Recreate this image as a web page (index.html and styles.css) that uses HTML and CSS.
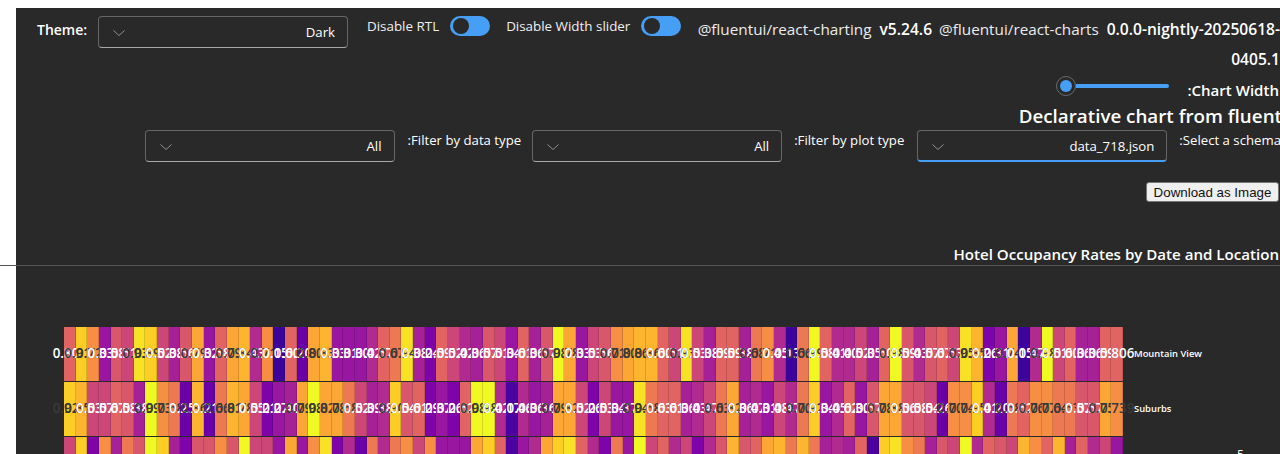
FILE: index.html
```html
<!DOCTYPE html>
<html lang="en">
<head>
<meta charset="utf-8">
<title>Declarative chart from fluentui</title>
<link rel="stylesheet" href="styles.css">
</head>
<body>
<main class="app">
  <header class="top">
    <span class="theme-label">Theme:</span>
    <div class="drop"><svg class="chev" viewBox="0 0 12 6"><path d="M.5.5 6 5.5 11.5.5"/></svg><span>Dark</span></div>
    <span class="sw-label first">Disable RTL</span>
    <div class="switch"><span class="knob"></span></div>
    <span class="sw-label second">Disable Width slider</span>
    <div class="switch"><span class="knob"></span></div>
    <p class="versions"><span>@fluentui/react-charting</span> <b>v5.24.6</b> <span>@fluentui/react-charts</span> <b>0.0.0-nightly-20250618-<br>0405.1</b></p>
  </header>
  <div class="width-row">
    <div class="slider"><span class="thumb"><span class="dot"></span></span><span class="rail"></span></div>
    <b class="width-label">:Chart Width</b>
  </div>
  <h1 class="title">Declarative chart from fluent</h1>
  <div class="filters">
    <div class="drop lead"><svg class="chev" viewBox="0 0 12 6"><path d="M.5.5 6 5.5 11.5.5"/></svg><span>All</span></div>
    <label class="f-label">:Filter by data type</label>
    <div class="drop"><svg class="chev" viewBox="0 0 12 6"><path d="M.5.5 6 5.5 11.5.5"/></svg><span>All</span></div>
    <label class="f-label plot">:Filter by plot type</label>
    <div class="drop focus"><svg class="chev" viewBox="0 0 12 6"><path d="M.5.5 6 5.5 11.5.5"/></svg><span>data_718.json</span></div>
    <label class="f-label last">:Select a schema</label>
  </div>
  <div class="actions"><button class="dl" type="button">Download as Image</button></div>
  <h2 class="chart-title">Hotel Occupancy Rates by Date and Location</h2>
  <div class="rule"></div>
  <section class="heat">
    <div class="row">
      <div class="cells">
<i class="a">0.807</i><i class="h">0.912</i><i class="c">0.724</i><i class="d">0.335</i><i class="e">0.583</i><i class="f">0.517</i><i class="y">0.934</i><i class="h">0.897</i><i class="f">0.523</i><i class="m">0.381</i><i class="e">0.568</i><i class="p">0.796</i><i class="d">0.326</i><i class="a">0.587</i><i class="p">0.791</i><i class="i">0.841</i><i class="n">0.431</i><i class="c">0.713</i><i class="l">0.153</i><i class="a">0.601</i><i class="k">0.208</i><i class="p">0.809</i><i class="i">0.839</i><i class="d">0.332</i>
<i class="d">0.318</i><i class="d">0.306</i><i class="n">0.425</i><i class="a">0.572</i><i class="o">0.672</i><i class="y">0.941</i><i class="m">0.384</i><i class="j">0.245</i><i class="a">0.592</i><i class="f">0.527</i><i class="n">0.424</i><i class="m">0.367</i><i class="e">0.574</i><i class="f">0.514</i><i class="d">0.346</i><i class="a">0.617</i><i class="m">0.368</i><i class="e">0.577</i><i class="g">0.987</i><i class="p">0.788</i><i class="d">0.335</i><i class="f">0.533</i><i class="e">0.565</i><i class="c">0.719</i><i class="p">0.803</i><i class="i">0.869</i>
<i class="i">0.861</i><i class="a">0.607</i><i class="f">0.513</i><i class="y">0.935</i><i class="f">0.537</i><i class="m">0.382</i><i class="a">0.598</i><i class="a">0.596</i><i class="m">0.386</i><i class="o">0.681</i><i class="c">0.718</i><i class="n">0.453</i><i class="l">0.139</i><i class="o">0.669</i><i class="g">0.991</i><i class="a">0.589</i><i class="n">0.417</i><i class="n">0.402</i><i class="f">0.525</i><i class="m">0.356</i><i class="a">0.603</i><i class="g">0.983</i><i class="e">0.594</i><i class="n">0.437</i><i class="e">0.574</i>
<i class="a">0.677</i><i class="f">0.536</i><i class="y">0.956</i><i class="i">0.854</i><i class="j">0.261</i><i class="d">0.316</i><i class="p">0.745</i><i class="l">0.155</i><i class="n">0.476</i><i class="g">0.989</i><i class="f">0.519</i><i class="a">0.608</i><i class="m">0.367</i><i class="m">0.361</i><i class="a">0.597</i><i class="a">0.806</i>
      </div>
      <span class="loc">Mountain View</span>
    </div>
    <div class="row">
      <div class="cells">
<i class="h">0.925</i><i class="i">0.857</i><i class="f">0.537</i><i class="f">0.576</i><i class="a">0.679</i><i class="e">0.588</i><i class="m">0.386</i><i class="g">0.996</i><i class="c">0.738</i><i class="o">0.682</i><i class="k">0.259</i><i class="i">0.861</i><i class="k">0.211</i><i class="o">0.661</i><i class="i">0.819</i><i class="p">0.787</i><i class="f">0.552</i><i class="j">0.216</i><i class="d">0.270</i><i class="m">0.401</i><i class="p">0.798</i><i class="g">0.988</i><i class="p">0.829</i><i class="p">0.788</i>
<i class="o">0.682</i><i class="f">0.521</i><i class="m">0.393</i><i class="n">0.386</i><i class="h">0.909</i><i class="e">0.547</i><i class="a">0.618</i><i class="j">0.296</i><i class="d">0.373</i><i class="j">0.266</i><i class="a">0.627</i><i class="g">0.988</i><i class="g">0.987</i><i class="n">0.425</i><i class="v">0.174</i><i class="n">0.467</i><i class="d">0.366</i><i class="m">0.369</i><i class="p">0.798</i><i class="p">0.828</i><i class="f">0.521</i><i class="j">0.261</i><i class="f">0.539</i><i class="d">0.345</i><i class="d">0.376</i><i class="y">0.943</i>
<i class="o">0.683</i><i class="a">0.631</i><i class="a">0.619</i><i class="m">0.368</i><i class="n">0.432</i><i class="f">0.476</i><i class="o">0.633</i><i class="p">0.829</i><i class="m">0.363</i><i class="n">0.478</i><i class="d">0.318</i><i class="f">0.487</i><i class="n">0.470</i><i class="o">0.701</i><i class="h">0.926</i><i class="d">0.344</i><i class="n">0.457</i><i class="a">0.628</i><i class="d">0.306</i><i class="e">0.577</i><i class="p">0.783</i><i class="p">0.888</i><i class="e">0.567</i><i class="e">0.584</i>
<i class="f">0.544</i><i class="k">0.260</i><i class="c">0.707</i><i class="c">0.748</i><i class="h">0.958</i><i class="n">0.419</i><i class="k">0.202</i><i class="o">0.682</i><i class="a">0.621</i><i class="c">0.768</i><i class="c">0.774</i><i class="o">0.641</i><i class="o">0.637</i><i class="e">0.578</i><i class="e">0.573</i><i class="p">0.756</i><i class="c">0.739</i>
      </div>
      <span class="loc">Suburbs</span>
    </div>
    <div class="row">
      <div class="cells">
<i class="f"></i><i class="h"></i><i class="j"></i><i class="c"></i><i class="m"></i><i class="o"></i><i class="e"></i><i class="g"></i><i class="h"></i><i class="m"></i><i class="j"></i><i class="e"></i><i class="e"></i><i class="c"></i><i class="e"></i><i class="g"></i><i class="f"></i><i class="f"></i><i class="d"></i><i class="p"></i><i class="d"></i><i class="c"></i><i class="y"></i><i class="j"></i>
<i class="n"></i><i class="k"></i><i class="o"></i><i class="n"></i><i class="o"></i><i class="c"></i><i class="f"></i><i class="c"></i><i class="d"></i><i class="d"></i><i class="d"></i><i class="p"></i><i class="h"></i><i class="a"></i><i class="v"></i><i class="d"></i><i class="n"></i><i class="p"></i><i class="h"></i><i class="y"></i><i class="a"></i><i class="n"></i><i class="j"></i><i class="o"></i><i class="d"></i><i class="g"></i>
<i class="f"></i><i class="a"></i><i class="n"></i><i class="f"></i><i class="j"></i><i class="n"></i><i class="e"></i><i class="i"></i><i class="e"></i><i class="a"></i><i class="p"></i><i class="i"></i><i class="o"></i><i class="i"></i><i class="o"></i><i class="m"></i><i class="n"></i><i class="m"></i><i class="a"></i><i class="v"></i><i class="h"></i><i class="y"></i><i class="c"></i><i class="o"></i><i class="m"></i>
<i class="e"></i><i class="f"></i><i class="g"></i><i class="n"></i><i class="a"></i><i class="e"></i><i class="f"></i><i class="i"></i><i class="c"></i><i class="a"></i><i class="i"></i><i class="m"></i><i class="a"></i><i class="n"></i><i class="f"></i><i class="d"></i>
      </div>
      <span class="tick">5</span>
    </div>
  </section>
</main>
</body>
</html>
```
FILE: styles.css
```css
html, body {
  margin: 0;
  height: 454px;
  overflow: hidden;
  background: #fff;
}
body {
  padding: 8px 0 0 16px;
  box-sizing: border-box;
  font-family: "Open Sans", "Noto Sans", sans-serif;
  font-size: 13px;
  color: #fff;
}
.app {
  width: 1264px;
  height: 446px;
  background: #292929;
  display: flex;
  flex-direction: column;
}

/* top bar */
.top {
  display: flex;
  align-items: flex-start;
  padding: 8px 0 0 21px;
}
.theme-label {
  font-weight: 600;
  font-size: 14px;
  line-height: 28px;
  width: 61px;
}
.drop {
  width: 250px;
  height: 32px;
  box-sizing: border-box;
  flex: none;
  display: flex;
  align-items: center;
  justify-content: space-between;
  padding: 0 12px 0 14px;
  border: 1px solid #666;
  border-bottom-color: #a8a8a8;
  border-radius: 4px;
  font-size: 13.2px;
  color: #fff;
}
.chev {
  width: 12px;
  height: 6px;
  margin-top: 2px;
  fill: none;
  stroke: #8f8f8f;
  stroke-width: 1;
}
.sw-label {
  font-size: 13.4px;
  line-height: 20px;
  color: #f0f0f0;
  white-space: nowrap;
}
.sw-label.first { margin: 0 11px 0 19px; }
.sw-label.second { margin: 0 11px 0 16px; }
.switch {
  width: 40px;
  height: 20px;
  flex: none;
  border-radius: 10px;
  background: #479ef5;
  display: flex;
  align-items: center;
  padding-left: 3px;
  box-sizing: border-box;
}
.knob {
  width: 16px;
  height: 16px;
  border-radius: 50%;
  background: #292929;
}
.versions {
  margin: -2px 0 0 16px;
  flex: 1;
  text-align: right;
  font-size: 15.3px;
  line-height: 30px;
  color: #ececec;
  white-space: nowrap;
}
.versions span { margin-right: 4px; }
.versions b { font-weight: 600; font-size: 15.6px; margin-right: 3px; color: #fff; }
.versions b:last-child { margin-right: 0; }

/* width slider */
.width-row {
  display: flex;
  justify-content: flex-end;
  align-items: flex-start;
  height: 27px;
  margin-top: 2px;
}
.slider {
  display: flex;
  align-items: center;
  margin-right: 18px;
}
.thumb {
  width: 20px;
  height: 20px;
  box-sizing: border-box;
  border: 1px solid #6a6a6a;
  border-radius: 50%;
  display: flex;
  align-items: center;
  justify-content: center;
  flex: none;
}
.dot {
  width: 12px;
  height: 12px;
  border-radius: 50%;
  background: #479ef5;
}
.rail {
  width: 93px;
  height: 4px;
  border-radius: 0 2px 2px 0;
  background: #479ef5;
}
.width-label {
  font-size: 15.05px;
  font-weight: 600;
  line-height: 28px;
  margin-right: 1px;
  white-space: nowrap;
}

/* headings */
.title {
  margin: 0 -2px 0 0;
  font-size: 18.8px;
  font-weight: 600;
  line-height: 26px;
  text-align: right;
  white-space: nowrap;
}

/* filters */
.filters {
  display: flex;
  justify-content: flex-end;
  align-items: flex-start;
  margin-top: 1px;
}
.filters .drop { margin-right: 12px; }
.filters .drop.lead { margin-right: 13px; }
.f-label {
  font-size: 13.2px;
  line-height: 20px;
  margin-right: 11px;
  white-space: nowrap;
}
.f-label.plot { margin-right: 13px; }
.f-label.last { margin-right: -1px; }
.drop.focus { border-bottom: 2px solid #479ef5; }

.actions {
  display: flex;
  justify-content: flex-end;
  margin-top: 20px;
  padding-right: 1px;
}
.dl {
  font: 13.33px "Liberation Sans", Arial, sans-serif;
  height: 20px;
  width: 133px;
  padding: 0;
  color: #111;
  background: #efefef;
  border: 1px solid #767676;
  border-radius: 3px;
}
.chart-title {
  margin: 42px 1px 0 0;
  font-size: 15.1px;
  font-weight: 600;
  line-height: 21px;
  text-align: right;
  white-space: nowrap;
}
.rule {
  height: 1px;
  background: #555;
  margin: 0 0 0 -16px;
  flex: none;
}

/* heatmap */
.heat {
  margin: 61px 0 0 48px;
  display: flex;
  flex-direction: column;
  gap: 1px;
}
.row {
  display: flex;
  align-items: center;
  height: 54px;
}
.cells {
  width: 1059px;
  height: 54px;
  flex: none;
  display: grid;
  grid-template-columns: repeat(91, 1fr);
}
.cells i {
  display: flex;
  align-items: center;
  justify-content: center;
  padding-bottom: 2px;
  box-sizing: border-box;
  font-style: normal;
  font-size: 13.4px;
  font-weight: 600;
  color: #fff;
  overflow: visible;
  white-space: nowrap;
  min-width: 0;
  box-shadow: inset -1px 0 rgba(0, 0, 0, .14);
}
.loc {
  margin: 0 0 2px 11px;
  font-size: 9.4px;
  font-weight: 600;
  white-space: nowrap;
}
.tick {
  align-self: flex-start;
  margin: 10px 0 0 114px;
  font-size: 12px;
  line-height: 16px;
}

/* plasma colour scale */
.l { background: #3c049b; }
.v { background: #4c02a1; }
.k { background: #6a00a8; }
.j { background: #7e03a8; }
.d { background: #9816a0; }
.m { background: #a62098; }
.n { background: #b12a90; }
.f { background: #cc4778; }
.e { background: #d8576b; }
.a { background: #e16462; }
.o { background: #ed7953; }
.c { background: #f68f44; }
.p { background: #fca636; }
.i { background: #fdb42f; }
.h { background: #fccd25; }
.y { background: #f7e225; }
.g { background: #f0f921; }
.cells .o, .cells .c, .cells .p, .cells .i, .cells .h, .cells .y, .cells .g { color: #3a3a3a; }
```
